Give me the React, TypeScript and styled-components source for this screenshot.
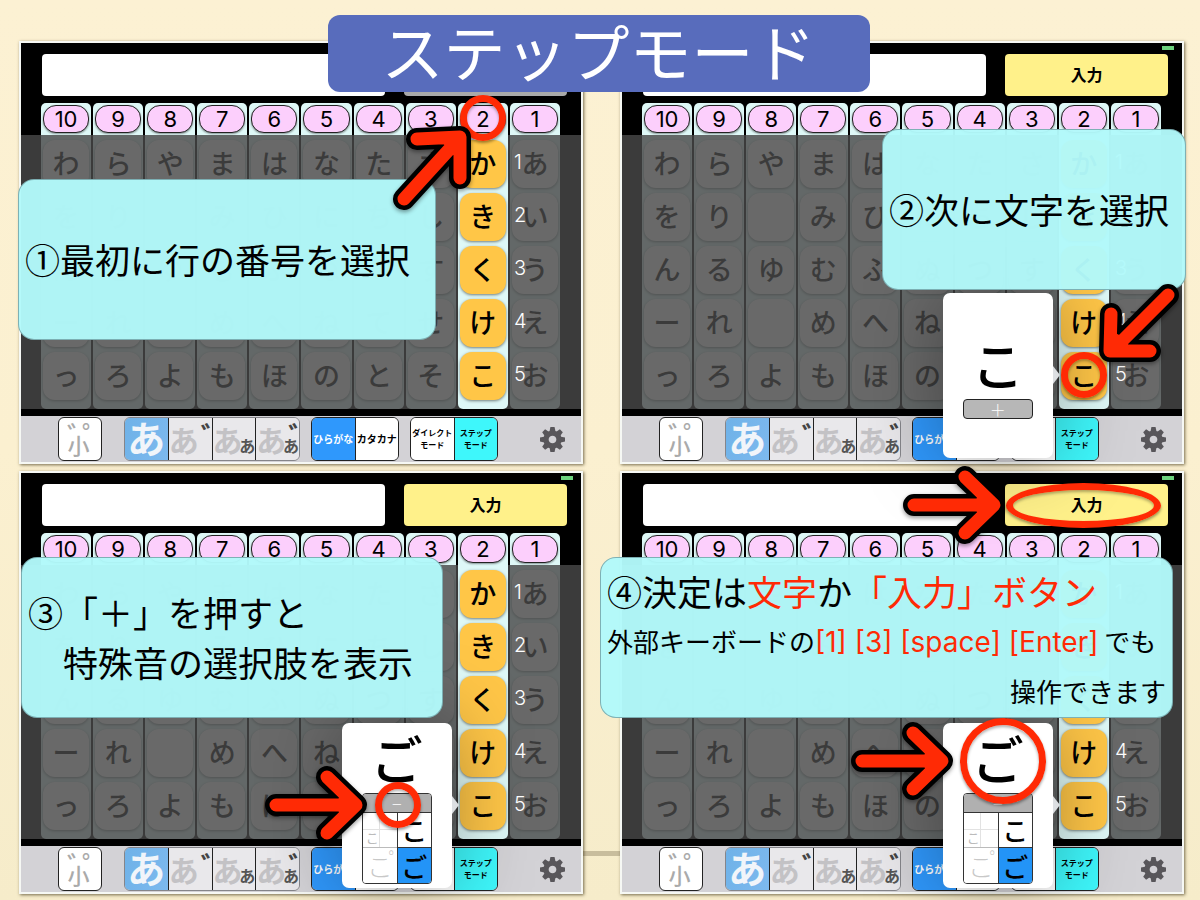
import React from "react";
import styled, { createGlobalStyle, css } from "styled-components";

const GlobalStyle = createGlobalStyle`
  *, *::before, *::after { box-sizing: border-box; }
  body {
    margin: 0;
    background: #fbf0d0;
    color: #000;
    font-family: "Noto Sans CJK JP", sans-serif;
  }
  button, input { font: inherit; color: inherit; margin: 0; }
  button { padding: 0; cursor: pointer; }
`;

const RED = "#ff2a05";

/* ---------- slide ---------- */

const Slide = styled.main`
  min-height: 100vh;
  padding: 15px 16px 6px 19px;
  background: linear-gradient(#fcf1d3, #fbf0d0 50%, #f6ecca);
  overflow: hidden;
`;

const Title = styled.h1`
  position: relative;
  z-index: 5;
  width: fit-content;
  height: 77px;
  margin: 0 0 -51px calc(50% - 274px);
  padding: 0 54px;
  border-radius: 12px;
  background: #586cbc;
  color: #fff;
  font-size: 62px;
  font-weight: 400;
  line-height: 70px;
  white-space: nowrap;
`;

const Panels = styled.div`
  position: relative;
  display: grid;
  grid-template-columns: 1fr 1fr;
  gap: 7px 37px;

  &::before {
    content: "";
    position: absolute;
    left: calc(50% - 19px);
    bottom: 38px;
    width: 38px;
    height: 5px;
    background: #c8bd9d;
  }
`;

const Panel = styled.section`
  position: relative;
  border: 2px solid #f6f8f4;
  background: #000;
  box-shadow: 1px 1px 3px rgba(60, 50, 20, 0.7);
`;

const Battery = styled.i`
  position: absolute;
  top: 3px;
  right: 8px;
  width: 12px;
  height: 4px;
  background: #6dd37e;
`;

const EntryBar = styled.div`
  display: flex;
  gap: 19px;
  padding: 11px 14px 7px 21px;
`;

const TextBox = styled.input`
  flex: 1;
  min-width: 0;
  height: 42px;
  padding: 0 12px;
  border: 0;
  border-radius: 4px;
  background: #fff;
  font-size: 18px;
`;

const EnterButton = styled.button<{ $dim?: boolean }>`
  width: 163px;
  height: 42px;
  padding-bottom: 2px;
  border: 0;
  border-radius: 4px;
  background: ${(p) => (p.$dim ? "#a9a9a9" : "#fff18a")};
  font-size: 16px;
  font-weight: 700;
`;

/* ---------- kana board ---------- */

const boardColumns = css`
  display: grid;
  grid-template-columns: repeat(10, minmax(0, 1fr));
  gap: 2px;
  padding: 0 21px 0 20px;
`;

const Board = styled.div`
  position: relative;
  ${boardColumns}
`;

const Shade = styled.div`
  position: absolute;
  z-index: 1;
  top: 32px;
  right: 0;
  bottom: 0;
  left: 0;
  background: rgba(72, 72, 72, 0.82);
  pointer-events: none;
`;

const Column = styled.div<{ $active?: boolean }>`
  position: relative;
  z-index: ${(p) => (p.$active ? 2 : 0)};
  display: flex;
  flex-direction: column;
  gap: 5px;
  padding: 2px 2px 9px;
  border-radius: 5px;
  background: #def8f7;
`;

const RowButton = styled.button`
  height: 28px;
  margin-bottom: 2px;
  border: 1px solid #222;
  border-radius: 13px;
  background: #fccffc;
  box-shadow: 0 1px 2px rgba(0, 0, 0, 0.4);
  font-family: Inter, sans-serif;
  font-size: 22px;
  line-height: 26px;
`;

const Cell = styled.div`
  position: relative;
  display: flex;
`;

const KanaKey = styled.button<{ $active?: boolean }>`
  flex: 1;
  height: 48px;
  padding-bottom: 2px;
  border: 0;
  border-radius: 12px;
  background: ${(p) => (p.$active ? "#ffc647" : "#fff")};
  box-shadow: 0 1px 3px rgba(0, 0, 0, 0.5);
  font-size: 27px;
  font-weight: 500;
  line-height: 44px;
`;

const RowIndex = styled.span`
  position: absolute;
  top: 8px;
  left: calc(100% + 8px);
  color: #fff;
  font-family: Inter, sans-serif;
  font-size: 20px;
  font-weight: 300;
  line-height: 28px;
`;

/* ---------- toolbar ---------- */

const Toolbar = styled.div`
  display: flex;
  align-items: center;
  height: 46px;
  margin-top: 7px;
  padding: 0 16px 0 37px;
  background: #d3d2d6;
`;

const group = css`
  height: 44px;
  border: 1px solid #222;
  border-radius: 6px;
`;

const SmallToggle = styled.button`
  ${group}
  display: flex;
  flex-direction: column;
  align-items: center;
  width: 44px;
  margin-right: 22px;
  background: #fff;
  color: #aaa;
  font-size: 22px;
  font-weight: 500;
  line-height: 22px;
`;

const Marks = styled.span`
  display: flex;
  height: 15px;
  margin: 3px 0 -3px 4px;
  font-size: 28px;
  font-weight: 500;
  line-height: 28px;
`;

const Mark = styled.span`
  width: 15px;
`;

const SmallKanji = styled.span`
  margin-right: 3px;
`;

const Group = styled.div<{ $soft?: boolean; $count: number }>`
  ${group}
  display: flex;
  width: ${(p) => p.$count * 44}px;
  margin-right: 11px;
  border-color: ${(p) => (p.$soft ? "#85858a" : "#222")};
  overflow: hidden;
`;

const Segment = styled.button<{ $fill?: string; $ink?: string; $size: number; $soft?: boolean }>`
  position: relative;
  flex: 1 1 0;
  min-width: 0;
  border: 0;
  background: ${(p) => p.$fill ?? "#fff"};
  color: ${(p) => p.$ink ?? "#000"};
  font-size: ${(p) => p.$size}px;
  font-weight: 700;
  line-height: 12px;
  white-space: nowrap;
  text-align: center;

  & + & { border-left: 1px solid ${(p) => (p.$soft ? "#85858a" : "#222")}; }
`;

const Lead = styled.span`
  display: block;
  height: 42px;
  line-height: 38px;
`;

const BigKana = styled.span`
  position: absolute;
  left: 0;
  top: 4px;
  font-size: 30px;
  line-height: 34px;
`;

const SmallKana = styled.span`
  position: absolute;
  right: 0;
  bottom: 6px;
  color: #555;
  font-size: 16px;
  line-height: 18px;
`;

const Dakuten = styled.span`
  position: absolute;
  left: 32px;
  top: 4px;
  color: #444;
  font-size: 28px;
  line-height: 28px;
`;

const GearButton = styled.button`
  display: flex;
  margin-left: auto;
  border: 0;
  background: none;
  color: #58565a;
`;

/* ---------- annotations ---------- */

const Layer = styled.div<{ $level: number }>`
  position: absolute;
  z-index: ${(p) => p.$level};
  top: 60px;
  left: 0;
  right: 0;
  ${boardColumns}
`;

const Anchor = styled.div`
  position: relative;
  grid-column: 9;
`;

const Callout = styled.div<{ $left: number; $top: number; $width: number; $full?: boolean }>`
  position: absolute;
  z-index: 3;
  left: ${(p) => p.$left}px;
  top: ${(p) => p.$top}px;
  display: flex;
  flex-direction: column;
  justify-content: center;
  width: ${(p) => p.$width}px;
  height: 161px;
  padding: ${(p) => (p.$full ? "7px 6px 0" : "0 6px 2px")};
  border: 1px solid rgba(90, 130, 135, 0.6);
  border-radius: 16px;
  background: rgba(178, 249, 250, 0.97);
  font-size: 35px;
  line-height: 50px;
  white-space: nowrap;

  p { margin: 0; }
`;

const Indented = styled.p`
  && { padding-left: 35px; }
`;

const Note = styled.p<{ $end?: boolean }>`
  font-size: 26px;
  text-align: ${(p) => (p.$end ? "right" : "left")};
`;

const Red = styled.span`
  color: ${RED};
`;

const Keys = styled(Red)`
  font-family: Inter, sans-serif;
  font-size: 28px;
  line-height: 28px;
`;

const ring = css`
  border: 7px solid ${RED};
  border-radius: 50%;
  box-shadow: 0 2px 3px rgba(0, 0, 0, 0.4), inset 0 2px 3px rgba(0, 0, 0, 0.3);
`;

const Ring = styled.div<{ $left: number; $top: number; $size: number }>`
  position: absolute;
  left: ${(p) => p.$left}px;
  top: ${(p) => p.$top}px;
  width: ${(p) => p.$size}px;
  height: ${(p) => p.$size}px;
  ${ring}
`;

const EnterRing = styled.div`
  position: absolute;
  z-index: 4;
  top: 10px;
  right: 21px;
  width: 155px;
  height: 45px;
  ${ring}
`;

const ArrowSvg = styled.svg<{ $left?: number; $right?: number; $top: number }>`
  position: absolute;
  z-index: 4;
  ${(p) => (p.$left !== undefined ? `left: ${p.$left}px;` : `right: ${p.$right}px;`)}
  top: ${(p) => p.$top}px;
  overflow: visible;
  fill: none;
  stroke-linecap: round;
  stroke-linejoin: round;
  filter: drop-shadow(0 2px 2px rgba(0, 0, 0, 0.4));
`;

const ARROWS = {
  right: { w: 102, h: 78, d: "M11 39H89M62 11L91 39L62 67M80 34L88 39L80 44Z" },
  upRight: { w: 78, h: 84, d: "M11 74L63 17M24 14L67 12L67 53M57 17L63 17L62 24Z" },
  downLeft: { w: 80, h: 78, d: "M68 11L16 63M11 30L10 67L50 67M15 56L15 62L22 62Z" },
};

type ArrowProps = { kind: keyof typeof ARROWS; left?: number; right?: number; top: number };

const Arrow = ({ kind, left, right, top }: ArrowProps) => {
  const { w, h, d } = ARROWS[kind];
  return (
    <ArrowSvg $left={left} $right={right} $top={top} width={w} height={h} aria-hidden="true">
      <path d={d} stroke="#000" strokeWidth={22} />
      <path d={d} stroke={RED} strokeWidth={13} />
    </ArrowSvg>
  );
};

/* ---------- popup ---------- */

const Popup = styled.div`
  position: absolute;
  top: 190px;
  right: calc(100% + 6px);
  width: 110px;
  height: 165px;
  display: flex;
  flex-direction: column;
  align-items: center;
  justify-content: flex-end;
  border-radius: 7px;
  background: #fff;
  box-shadow: 0 0 80px rgba(0, 0, 0, 0.36);

  &::after {
    content: "";
    position: absolute;
    left: 100%;
    top: 73px;
    border: 9px solid transparent;
    border-left: 7px solid #dcdfe2;
    border-right: 0;
  }
`;

const PopupKana = styled.button`
  border: 0;
  background: none;
  font-size: 52px;
  font-weight: 500;
  line-height: 70px;
`;

const PlusButton = styled.button`
  width: 70px;
  height: 20px;
  margin-bottom: 39px;
  border: 1px solid #222;
  border-radius: 4px;
  background: #b7b7b7;
  color: #fff;
  font-size: 16px;
  font-weight: 300;
  line-height: 16px;
`;

const Choices = styled.div`
  flex: none;
  width: 70px;
  margin-bottom: 4px;
  border: 1px solid #333;
  border-radius: 4px;
  overflow: hidden;
`;

const MinusButton = styled.button`
  display: block;
  width: 100%;
  height: 19px;
  border: 0;
  border-bottom: 1px solid #333;
  background: #b0b0b0;
  color: #fff;
  font-size: 18px;
  font-weight: 300;
  line-height: 16px;
`;

const ChoiceGrid = styled.div`
  display: grid;
  grid-template-columns: 1fr 1fr;
  grid-auto-rows: 35px;
`;

const Choice = styled.button<{ $state?: "on" | "off" }>`
  position: relative;
  border: 0;
  background: ${(p) => (p.$state === "on" ? "#2394f7" : "#fff")};
  color: ${(p) => (p.$state === "off" ? "#c8c8c8" : "#000")};
  font-size: 26px;
  font-weight: ${(p) => (p.$state === "off" ? 300 : 500)};
  line-height: 34px;

  &:nth-child(even) { border-left: 1px solid #333; }
  &:nth-child(1) { border-bottom: 1px solid #bbb; }
  &:nth-child(2) { border-bottom: 1px solid #333; }
`;

const Quarters = styled.span`
  position: absolute;
  inset: 0;
  display: grid;
  grid-template-columns: 1fr 1fr;
  grid-template-rows: 1fr 1fr;

  i:nth-child(odd) { border-right: 1px solid #e2e2e2; }
  i:nth-child(-n + 2) { border-bottom: 1px solid #e2e2e2; }
`;

const Quarter = styled.i`
  color: #bbb;
  font-size: 13px;
  font-style: normal;
  font-weight: 400;
  line-height: 16px;
  text-align: right;
`;

const Handakuten = styled.span`
  position: absolute;
  left: 26px;
  top: 1px;
  font-size: 18px;
  line-height: 18px;
`;

/* ---------- pieces ---------- */

const COLUMNS = [
  "わをんーっ",
  "らりるれろ",
  "や ゆ よ",
  "まみむめも",
  "はひふへほ",
  "なにぬねの",
  "たちつてと",
  "さしすせそ",
  "かきくけこ",
  "あいうえお",
];

const Gear = () => (
  <svg width="25" height="25" viewBox="-12 -12 24 24" aria-hidden="true">
    <g fill="currentColor">
      {[0, 45, 90, 135, 180, 225, 270, 315].map((a) => (
        <path key={a} d="M-3 -7L-2 -12H2L3 -7Z" transform={`rotate(${a})`} />
      ))}
    </g>
    <circle r="6.2" fill="none" stroke="currentColor" strokeWidth="5" />
  </svg>
);

const KanaBoard = () => (
  <Board>
    {COLUMNS.map((kana, c) => {
      const active = c === 8;
      return (
        <Column key={c} $active={active}>
          <RowButton>{10 - c}</RowButton>
          {kana.split("").map((k, r) => (
            <Cell key={r}>
              <KanaKey $active={active} aria-label={k === " " ? "空白" : undefined}>
                {k.trim()}
              </KanaKey>
              {active && <RowIndex>{r + 1}</RowIndex>}
            </Cell>
          ))}
        </Column>
      );
    })}
    <Shade />
  </Board>
);

const SOFT = "#e9e8eb";
const PALE = "#c3c2c5";

const BottomBar = () => (
  <Toolbar>
    <SmallToggle>
      <Marks>
        <Mark>゛</Mark>
        <Mark>゜</Mark>
      </Marks>
      <SmallKanji>小</SmallKanji>
    </SmallToggle>
    <Group $soft $count={4}>
      <Segment $soft $size={38} $fill="linear-gradient(110deg, #6fb2e8, #7db9ee)" $ink="#f1f5fa">
        <Lead>あ</Lead>
      </Segment>
      <Segment $soft $size={30} $fill={SOFT} $ink={PALE}>
        <BigKana>あ</BigKana>
        <Dakuten>゛</Dakuten>
      </Segment>
      <Segment $soft $size={30} $fill={SOFT} $ink={PALE}>
        <BigKana>あ</BigKana>
        <SmallKana>あ</SmallKana>
      </Segment>
      <Segment $soft $size={30} $fill={SOFT} $ink={PALE}>
        <BigKana>あ</BigKana>
        <Dakuten>゛</Dakuten>
        <SmallKana>あ</SmallKana>
      </Segment>
    </Group>
    <Group $count={2}>
      <Segment $size={10} $fill="#2f98fc" $ink="#fff">ひらがな</Segment>
      <Segment $size={10}>カタカナ</Segment>
    </Group>
    <Group $count={2}>
      <Segment $size={8}>
        ダイレクト
        <br />
        モード
      </Segment>
      <Segment $size={8} $fill="#3ef7fb">
        ステップ
        <br />
        モード
      </Segment>
    </Group>
    <GearButton aria-label="設定">
      <Gear />
    </GearButton>
  </Toolbar>
);

const Keyboard = ({ disabled, children }: { disabled?: boolean; children: React.ReactNode }) => (
  <Panel>
    <Battery />
    <EntryBar>
      <TextBox aria-label="入力欄" />
      <EnterButton $dim={disabled} aria-label="入力">
        {disabled ? null : "入力"}
      </EnterButton>
    </EntryBar>
    <KanaBoard />
    <BottomBar />
    {children}
  </Panel>
);

const Overlay = ({ level, children }: { level: number; children: React.ReactNode }) => (
  <Layer $level={level}>
    <Anchor>{children}</Anchor>
  </Layer>
);

const VariantPopup = () => (
  <Popup>
    <PopupKana>ご</PopupKana>
    <Choices>
      <MinusButton>−</MinusButton>
      <ChoiceGrid>
        <Choice $state="off">
          <Quarters>
            <Quarter />
            <Quarter />
            <Quarter>こ</Quarter>
            <Quarter />
          </Quarters>
        </Choice>
        <Choice>こ</Choice>
        <Choice $state="off">
          こ<Handakuten>゜</Handakuten>
        </Choice>
        <Choice $state="on">ご</Choice>
      </ChoiceGrid>
    </Choices>
  </Popup>
);

export default function App() {
  return (
    <>
      <GlobalStyle />
      <Slide>
        <Title>ステップモード</Title>
        <Panels>
          <Keyboard disabled>
            <Callout $left={-3} $top={136} $width={418}>
              <p>①最初に行の番号を選択</p>
            </Callout>
            <Overlay level={4}>
              <Ring $left={2} $top={-8} $size={46} />
              <Arrow kind="upRight" left={-65} top={22} />
            </Overlay>
          </Keyboard>

          <Keyboard>
            <Overlay level={2}>
              <Popup>
                <PopupKana>こ</PopupKana>
                <PlusButton>＋</PlusButton>
              </Popup>
            </Overlay>
            <Callout $left={260} $top={86} $width={304}>
              <p>②次に文字を選択</p>
            </Callout>
            <Overlay level={4}>
              <Ring $left={2} $top={249} $size={46} />
              <Arrow kind="downLeft" left={41} top={181} />
            </Overlay>
          </Keyboard>

          <Keyboard>
            <Overlay level={2}>
              <VariantPopup />
            </Overlay>
            <Callout $left={0} $top={84} $width={422}>
              <p>③「＋」を押すと</p>
              <Indented>特殊音の選択肢を表示</Indented>
            </Callout>
            <Overlay level={4}>
              <Ring $left={-83} $top={249} $size={46} />
              <Arrow kind="right" left={-193} top={233} />
            </Overlay>
          </Keyboard>

          <Keyboard>
            <Overlay level={2}>
              <VariantPopup />
            </Overlay>
            <Callout $full $left={-22} $top={84} $width={573}>
              <p>
                ④決定は<Red>文字</Red>か<Red>「入力」ボタン</Red>
              </p>
              <Note>
                外部キーボードの<Keys>[1] [3] [space] [Enter]</Keys> でも
              </Note>
              <Note $end>操作できます</Note>
            </Callout>
            <EnterRing />
            <Arrow kind="right" right={177} top={-7} />
            <Overlay level={4}>
              <Ring $left={-99} $top={185} $size={86} />
              <Arrow kind="right" left={-208} top={189} />
            </Overlay>
          </Keyboard>
        </Panels>
      </Slide>
    </>
  );
}
